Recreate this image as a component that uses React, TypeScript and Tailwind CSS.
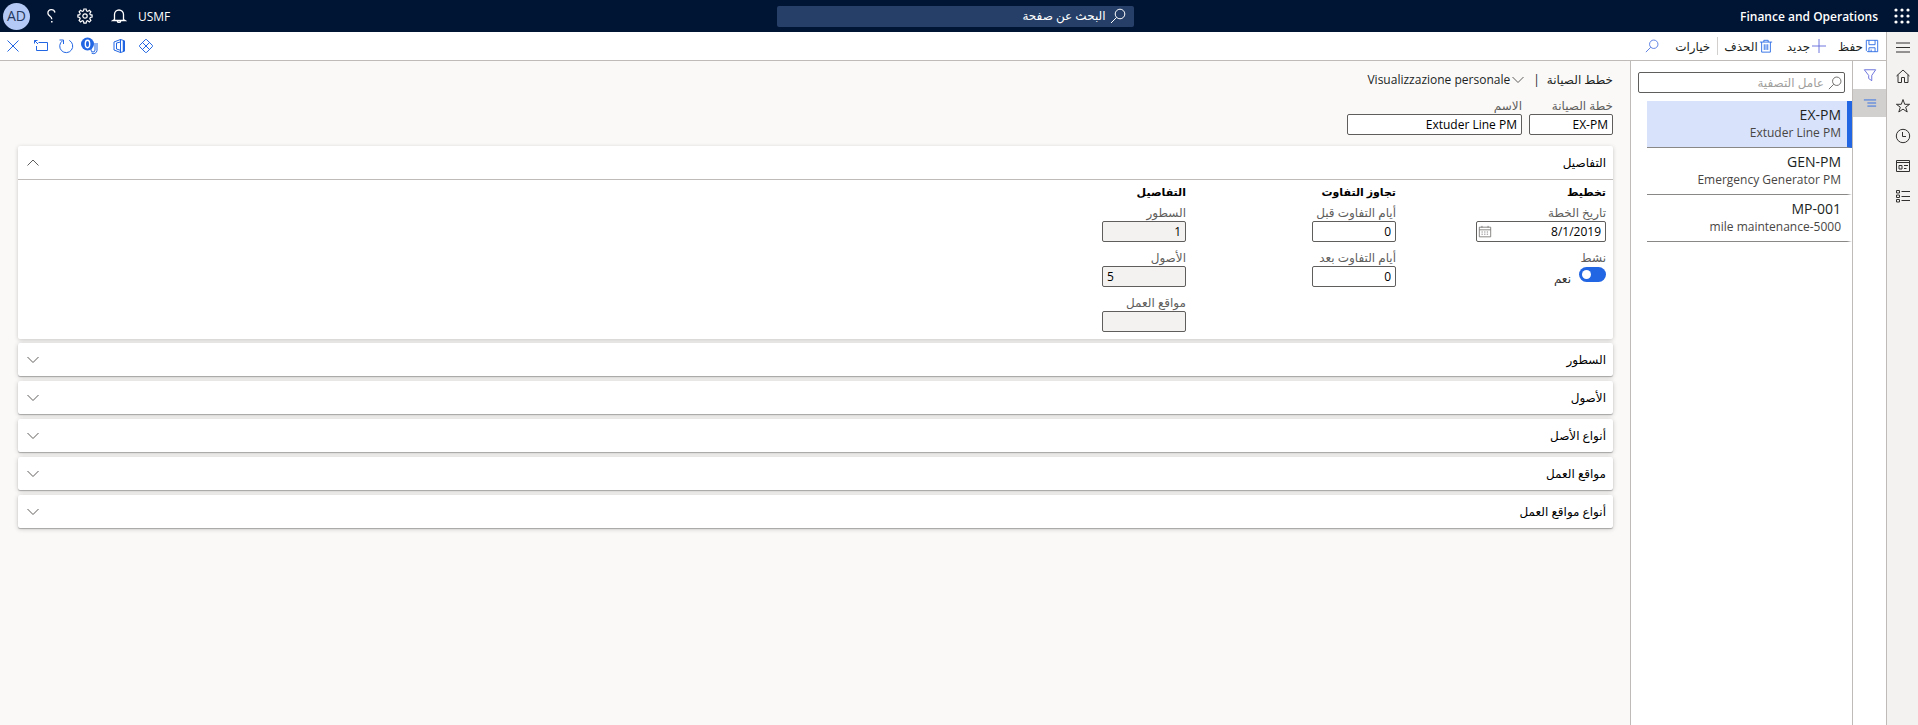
import type { ReactNode } from "react";

type IconProps = { className?: string; children: ReactNode; box?: number };

function Icon({ className = "size-4", children, box = 16 }: IconProps) {
  return (
    <svg
      viewBox={`0 0 ${box} ${box}`}
      className={`shrink-0 ${className}`}
      fill="none"
      stroke="currentColor"
      strokeWidth="1"
      aria-hidden="true"
    >
      {children}
    </svg>
  );
}

const Magnifier = ({ className }: { className?: string }) => (
  <Icon className={className}>
    <circle cx="10" cy="6" r="4.8" />
    <path d="M6.600 9.400 1 15" />
  </Icon>
);

const Chevron = ({ up = false }: { up?: boolean }) => (
  <Icon className="size-4 text-[#605e5c]">
    <path d={up ? "M2.500 10.500 8 5 13.500 10.500" : "M2.500 5 8 10.500 13.500 5"} />
  </Icon>
);

function IconButton({ label, className = "", children }: { label: string; className?: string; children: ReactNode }) {
  return (
    <button type="button" aria-label={label} className={`flex items-center justify-center ${className}`}>
      {children}
    </button>
  );
}

function TopBar() {
  const dots = [2, 8, 14];
  return (
    <header className="grid h-8 grid-cols-[1fr_357px_1fr] items-center bg-[#001433] pr-2 text-white">
      <div className="flex items-center gap-4">
        <IconButton label="Apps">
          <svg viewBox="0 0 16 16" className="size-4" fill="currentColor" aria-hidden="true">
            {dots.map((y) => dots.map((x) => <circle key={`${x}-${y}`} cx={x} cy={y} r="1.6" />))}
          </svg>
        </IconButton>
        <span className="pt-px text-xs font-semibold">Finance and Operations</span>
      </div>
      <label className="flex h-[21px] items-center gap-1 rounded-xs bg-[#263f68] pr-2">
        <Magnifier className="size-4" />
        <input
          aria-label="البحث عن صفحة"
          placeholder="البحث عن صفحة"
          className="min-w-0 flex-1 bg-transparent text-xs outline-none placeholder:text-white"
        />
      </label>
      <div className="flex items-center justify-end pl-[3px]">
        <button type="button" className="pt-px text-xs">USMF</button>
        <IconButton label="Notifications" className="mr-[11px]">
          <Icon>
            <path
              d="M3.500 11.500V6.500a4.500 4.500 0 0 1 9 0v5l1.500 1H2zM6.200 12.800c.3 2.200 3.300 2.200 3.600 0"
              strokeWidth="1.300"
            />
          </Icon>
        </IconButton>
        <IconButton label="Settings" className="mr-[18px]">
          <Icon>
            <circle cx="8" cy="8" r="2.200" strokeWidth="1.200" />
            <path
              d="M6.900 1h2.200l.4 1.900 1.200.5 1.700-1.100 1.500 1.500-1.100 1.700.5 1.200 1.800.4v2l-1.800.4-.5 1.200 1.100 1.700-1.500 1.500-1.700-1.100-1.200.5-.4 1.800H6.900l-.4-1.800-1.200-.5-1.700 1.100-1.500-1.500 1.100-1.700-.5-1.200L.9 9.100v-2l1.800-.4.5-1.200-1.100-1.700 1.500-1.500 1.700 1.100 1.200-.5z"
              strokeWidth="1.200"
            />
          </Icon>
        </IconButton>
        <IconButton label="Help" className="mr-[18px]">
          <Icon>
            <path
              d="M12 4.500C11.500 2.400 10 1.600 8.300 1.600 6.200 1.600 4.800 3.200 4.900 5.200 5 8 8.800 8 8.800 11.200"
              strokeWidth="1.300"
            />
            <path d="M8.800 13v1.600" strokeWidth="1.500" />
          </Icon>
        </IconButton>
        <button
          type="button"
          className="mr-[13px] flex size-[27px] items-center justify-center rounded-full bg-[#b4c9f5] text-sm text-[#24375c]"
        >
          AD
        </button>
      </div>
    </header>
  );
}

function ActionBar() {
  return (
    <div className="flex h-[29px] items-center justify-between border-b border-[#bebbb8] bg-white pr-[7px] pl-[5px] text-[#201f1e]">
      <div className="flex items-center">
        <button type="button" className="flex items-center gap-[2px] text-xs">
          <Icon className="size-[14px] text-[#2266e3]">
            <path d="M1.500 1.500h13v13H3l-1.500-1.500zM4.500 1.500v5h7v-5M4.500 14.500v-4.500h7v4.500M7 12v2.500" />
          </Icon>
          <span className="pt-[2px]">حفظ</span>
        </button>
        <button type="button" className="mr-3 flex items-center gap-[2px] text-xs">
          <Icon className="size-[14px] text-[#5b63d8]">
            <path d="M8 0v16M0 8h16" />
          </Icon>
          <span className="pt-[2px]">جديد</span>
        </button>
        <button type="button" className="mr-[14px] flex items-center gap-px text-xs">
          <Icon className="size-[14px] text-[#2266e3]">
            <path d="M1 3.500h14M5.500 3.500v-2h5v2M3 3.500v11.500h10v-11.500M6 6v6.500M8 6v6.500M10 6v6.500" />
          </Icon>
          <span className="pt-[2px]">الحذف</span>
        </button>
        <span className="mr-[6px] h-[18px] w-px bg-[#d2d0ce]" />
        <button type="button" className="mr-[7px] pt-[2px] text-xs">خيارات</button>
        <IconButton label="بحث" className="mr-4 text-[#4a72e0]">
          <Magnifier className="size-[14px]" />
        </IconButton>
      </div>
      <div className="flex items-center text-[#2266e3]">
        <IconButton label="Power Apps">
          <Icon>
            <path d="M7.300 1.700a1 1 0 0 1 1.400 0l5.600 5.600a1 1 0 0 1 0 1.400l-5.600 5.600a1 1 0 0 1-1.400 0L1.700 8.700a1 1 0 0 1 0-1.400zM4.700 4.700l6.600 6.600M11.300 4.700l-6.600 6.600" />
          </Icon>
        </IconButton>
        <IconButton label="Office" className="mr-[11px]">
          <Icon>
            <path d="M9.500 1.500 3 4v8l6.500 2.500V12.300L5.500 11V5l4-1z" />
            <path d="M9.500 1.500 13.500 2.800v10.400l-4 1.300z" />
            <path d="M12.500 3v10" strokeWidth="1.500" />
          </Icon>
        </IconButton>
        <IconButton label="Attachments" className="mr-[11px]">
          <Icon className="h-[18px] w-[20px]" box={18}>
            <path d="M10 7v6a2 2 0 0 0 4 0V6M16 6v7.500a3.500 3.500 0 0 1-5.500 2.500" />
            <circle cx="6.500" cy="7" r="6.500" fill="#2266e3" stroke="none" />
            <ellipse cx="6.500" cy="7" rx="2.200" ry="3.700" stroke="white" strokeWidth="1.400" />
          </Icon>
        </IconButton>
        <IconButton label="Refresh" className="mr-[6px]">
          <Icon>
            <path d="M4.500 2.800A6.500 6.500 0 1 0 11.300 2.400M1.500 2h4v4" />
          </Icon>
        </IconButton>
        <IconButton label="Open in new window" className="mr-[9px]">
          <Icon>
            <path d="M5.500 4.500h9v8h-11V8M1.500 5.500v-3h3M1.500 2.500l3.500 3.500" />
          </Icon>
        </IconButton>
        <IconButton label="Close" className="mr-3">
          <Icon>
            <path d="M2.500 2.500l11 11M13.500 2.500l-11 11" />
          </Icon>
        </IconButton>
      </div>
    </div>
  );
}

function NavRail() {
  return (
    <nav className="flex w-8 shrink-0 flex-col border-l border-[#bebbb8] bg-[#f3f2f1] pt-2 text-[#323130]">
      <div className="flex flex-col items-center gap-[14px]">
        <IconButton label="القائمة" className="h-[14px]">
          <Icon><path d="M1 4h14M1 8.500h14M1 13h14" /></Icon>
        </IconButton>
        <IconButton label="الصفحة الرئيسية">
          <Icon><path d="M1.500 8 8 2 14.500 8M3 6.800v7.700h3.500v-5h3v5H13V6.800" /></Icon>
        </IconButton>
        <IconButton label="المفضلة">
          <Icon><path d="M8 1.500 9.700 6.300H14.600L10.700 9.200 12.200 14 8 11.100 3.800 14 5.300 9.200 1.400 6.300H6.300z" /></Icon>
        </IconButton>
        <IconButton label="الحديثة">
          <Icon><circle cx="8" cy="8" r="6.700" /><path d="M7.500 4V8.500h3.500" /></Icon>
        </IconButton>
        <IconButton label="مساحات العمل">
          <Icon><path d="M1.500 2.500h13v11h-13zM1.500 4.500h13M4 7.500h3v3.500H4zM9 7.500h4M9 10.500h2.500" /></Icon>
        </IconButton>
        <IconButton label="الوحدات">
          <Icon><path d="M1.500 2.500h3v2.500h-3zM1.500 7h3v2.500h-3zM1.500 11.500h3v2.500h-3zM6.500 3.500H15M6.500 8.500H15M6.500 12.500H15" /></Icon>
        </IconButton>
      </div>
    </nav>
  );
}

const plans = [
  { code: "EX-PM", name: "Extuder Line PM", selected: true },
  { code: "GEN-PM", name: "Emergency Generator PM", selected: false },
  { code: "MP-001", name: "mile maintenance-5000", selected: false },
];

function PlanList() {
  return (
    <aside className="flex shrink-0 border-l border-[#bebbb8] bg-white">
      <div className="w-[34px] border-l border-[#bebbb8]">
        <IconButton label="إظهار عوامل التصفية" className="h-7 w-full text-[#5b63d8]">
          <Icon className="size-[14px]"><path d="M1.500 2h13L10 8.500v6L6.500 12V8.500z" /></Icon>
        </IconButton>
        <IconButton label="إظهار القائمة" className="h-7 w-full bg-[#d2d0ce] text-[#2266e3]">
          <Icon className="size-[14px]"><path d="M1 4.500h14M5 8h10M5 11.500h10" /></Icon>
        </IconButton>
      </div>
      <div className="w-[221px]">
        <label className="mx-[7px] mt-[11px] flex h-[21px] items-center gap-1 rounded-xs border border-[#605e5c] pr-[2px] text-[#605e5c]">
          <Magnifier className="size-[14px]" />
          <input
            aria-label="عامل التصفية"
            placeholder="عامل التصفية"
            className="min-w-0 flex-1 bg-transparent text-xs outline-none placeholder:text-[#a19f9d]"
          />
        </label>
        <ul className="mt-2 ml-4">
          {plans.map((plan) => (
            <li
              key={plan.code}
              className={`border-b border-b-[#8a8886] ${plan.selected ? "border-r-[5px] border-r-[#2266e3] bg-[#d8e3fb]" : "border-r-[5px] border-r-transparent"}`}
            >
              <a href="#" className="flex h-[46px] flex-col pt-[5px] pr-[6px]">
                <span className="text-sm leading-[18px] text-[#201f1e]">{plan.code}</span>
                <span dir="ltr" className="text-right text-xs leading-[18px] text-[#484644]">{plan.name}</span>
              </a>
            </li>
          ))}
        </ul>
      </div>
    </aside>
  );
}

type FieldProps = {
  id: string;
  label: string;
  value: string;
  width?: string;
  readOnly?: boolean;
  ltr?: boolean;
  calendar?: boolean;
};

function Field({ id, label, value, width = "w-[84px]", readOnly = false, ltr = false, calendar = false }: FieldProps) {
  return (
    <div className={`flex flex-col ${width}`}>
      <label htmlFor={id} className="h-4 text-xs leading-4 whitespace-nowrap text-[#605e5c]">{label}</label>
      <div
        className={`flex h-[21px] items-center rounded-xs border border-[#605e5c] ${readOnly ? "bg-[#f3f2f1]" : "bg-white"}`}
      >
        <input
          id={id}
          defaultValue={value}
          readOnly={readOnly}
          dir={ltr ? "ltr" : "rtl"}
          className="h-full w-full min-w-0 bg-transparent px-1 text-xs text-black outline-none"
        />
        {calendar && (
          <IconButton label="اختيار تاريخ" className="ml-px text-[#7a7876]">
            <Icon className="size-[14px]">
              <path d="M1.500 2.500h13v11h-13zM1.500 5.500h13M4.500 1v2M11.500 1v2" />
              <path d="M4 8h8M4 10.500h8" strokeDasharray="1.500 1.500" />
            </Icon>
          </IconButton>
        )}
      </div>
    </div>
  );
}

const GroupTitle = ({ children }: { children: ReactNode }) => (
  <h3 className="-mb-2 h-[21px] text-[11px] leading-4 font-bold text-black">{children}</h3>
);

function Details() {
  return (
    <section className="rounded-xs bg-white shadow-[0_1px_4px_rgba(0,0,0,0.2)]">
      <h2>
        <button
          type="button"
          aria-expanded="true"
          className="flex h-[34px] w-full items-center justify-between border-b border-[#bebbb8] px-[7px] text-xs text-black"
        >
          <span>التفاصيل</span>
          <Chevron up />
        </button>
      </h2>
      <div className="flex gap-20 px-[7px] pt-1 pb-[7px]">
        <div className="flex w-[130px] flex-col gap-2">
          <GroupTitle>تخطيط</GroupTitle>
          <Field id="plan-date" label="تاريخ الخطة" value="8/1/2019" width="w-[130px]" calendar />
          <div>
            <label htmlFor="active" className="block h-4 text-xs leading-4 text-[#605e5c]">نشط</label>
            <div className="flex items-start gap-2 pt-px">
              <input
                id="active"
                type="checkbox"
                role="switch"
                defaultChecked
                className="flex h-[15px] w-[27px] appearance-none items-center justify-start rounded-full bg-[#8a8886] px-[3px] before:size-[9px] before:rounded-full before:bg-white checked:justify-end checked:bg-[#2266e3]"
              />
              <span className="pt-1 text-xs text-[#323130]">نعم</span>
            </div>
          </div>
        </div>
        <div className="flex w-[130px] flex-col gap-2">
          <GroupTitle>تجاوز التفاوت</GroupTitle>
          <Field id="tolerance-before" label="أيام التفاوت قبل" value="0" />
          <Field id="tolerance-after" label="أيام التفاوت بعد" value="0" />
        </div>
        <div className="flex w-[130px] flex-col gap-2">
          <GroupTitle>التفاصيل</GroupTitle>
          <Field id="lines" label="السطور" value="1" readOnly />
          <Field id="assets" label="الأصول" value="5" readOnly ltr />
          <Field id="locations" label="مواقع العمل" value="" readOnly />
        </div>
      </div>
    </section>
  );
}

const sections = ["السطور", "الأصول", "أنواع الأصل", "مواقع العمل", "أنواع مواقع العمل"];

export default function App() {
  return (
    <div
      dir="rtl"
      className="flex min-h-screen flex-col bg-[#faf9f8] font-['Open_Sans','DejaVu_Sans',sans-serif]"
    >
      <TopBar />
      <div className="flex flex-1">
        <NavRail />
        <div className="flex min-w-0 flex-1 flex-col">
          <ActionBar />
          <div className="flex flex-1">
            <PlanList />
            <main className="min-w-0 flex-1 pt-[9px] pr-[17px] pl-[18px]">
              <div className="flex h-5 items-center text-xs text-[#201f1e]">
                <h1>خطط الصيانة</h1>
                <span className="mx-[7px]">|</span>
                <button type="button" className="flex items-center">
                  <Chevron />
                  <span>Visualizzazione personale</span>
                </button>
              </div>
              <div className="mt-2 flex gap-[7px]">
                <Field id="plan" label="خطة الصيانة" value="EX-PM" />
                <Field id="name" label="الاسم" value="Extuder Line PM" width="w-[175px]" />
              </div>
              <div className="mt-[11px]">
                <Details />
                <div className="mt-1 flex flex-col gap-[5px]">
                  {sections.map((title) => (
                    <h2 key={title} className="rounded-xs bg-white shadow-[0_1px_1px_rgba(0,0,0,0.25),0_1px_5px_rgba(0,0,0,0.2)]">
                      <button
                        type="button"
                        aria-expanded="false"
                        className="flex h-[33px] w-full items-center justify-between px-[7px] text-xs text-black"
                      >
                        <span>{title}</span>
                        <Chevron />
                      </button>
                    </h2>
                  ))}
                </div>
              </div>
            </main>
          </div>
        </div>
      </div>
    </div>
  );
}
